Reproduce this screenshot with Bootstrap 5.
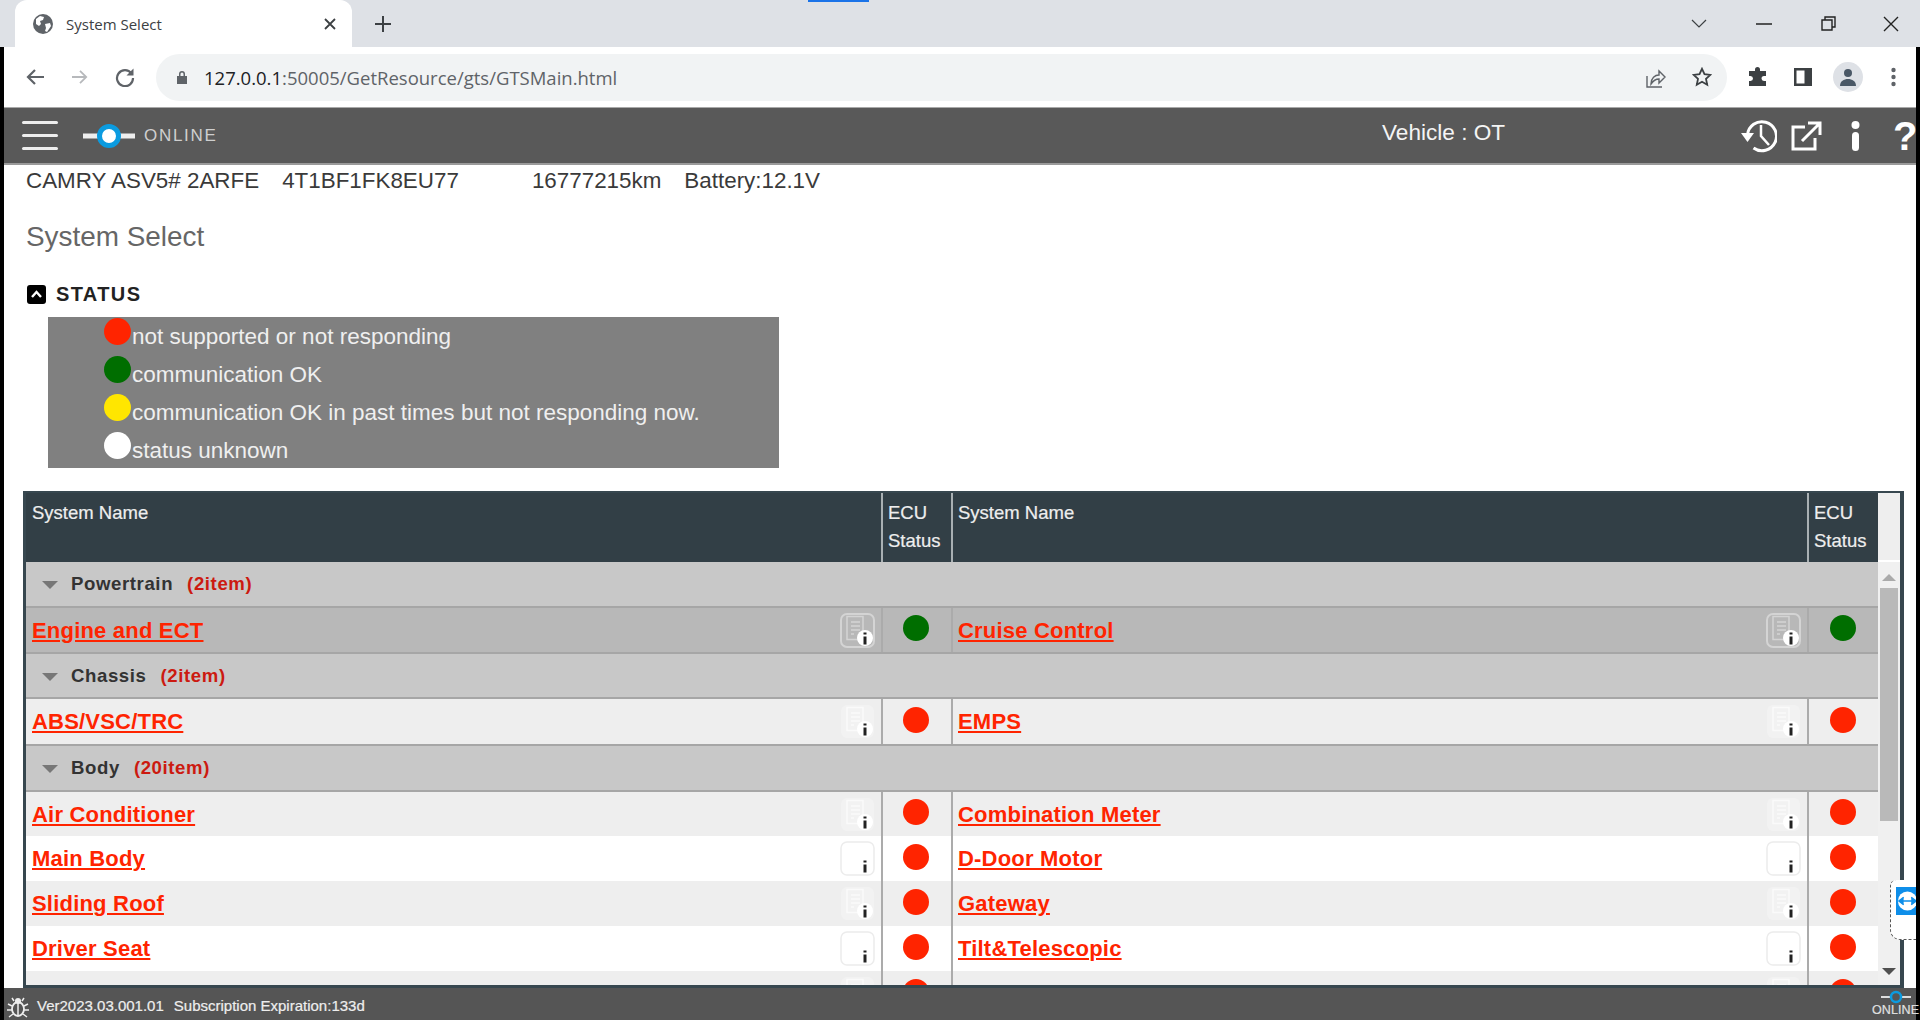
<!DOCTYPE html>
<html lang="en">
<head>
<meta charset="utf-8">
<title>System Select</title>
<link href="https://cdn.jsdelivr.net/npm/bootstrap@5.3.0/dist/css/bootstrap.min.css" rel="stylesheet">
<style>
html,body{height:100%;overflow:hidden}
body{background:#000;font-family:"Liberation Sans",Arial,sans-serif;color:#333}
.tabstrip{height:47px;background:#dee1e6;padding-left:15px;position:relative}
.topline{position:absolute;left:808px;top:0;width:61px;height:2px;background:#1a73e8}
.tabshape{width:337px;height:47px;background:#fff;border-radius:12px 12px 0 0;padding:0 16px 0 18px;font:15px "Open Sans",sans-serif;color:#3c4043}
.tabtitle{margin-left:13px;width:258px}
.plus{margin-left:22px}
.winctl{margin-left:auto}
.winbtn{width:65px;justify-content:center}
.winbtn.lastbtn{width:59px}
.shell{flex:1;min-height:0;margin:0 4px;background:#fff;position:relative}
.toolbar{height:61px;background:#fff;border-bottom:1px solid #a9a9a9;padding-left:21px}
.navicons{gap:26px;width:131px}
.omnibox{width:1571px;height:47px;background:#f1f3f4;border-radius:24px;padding:0 15px 0 21px;font:18.5px "Open Sans",sans-serif;color:#5f6368}
.omnibox b{font-weight:400;color:#202124}
.urltext{margin-left:17px}
.omniright{margin-left:auto;gap:26px}
.extras{gap:26px;margin-left:21px}
.avatar{width:30px;height:30px;border-radius:50%;background:#dee1e6;display:flex;align-items:center;justify-content:center;margin:0 2px 0 -5px}
.apphead{height:57px;background:#595959;border-bottom:2px solid #9a9a9a;padding-left:18px;color:#fff;overflow:hidden}
.burger{width:36px;gap:9.5px}
.burger span{height:3.5px;background:#eee;border-radius:2px}
.onlineico{margin-left:25px}
.onlinetxt{font-size:17px;letter-spacing:1.7px;color:#cfcfcf;margin-left:9px}
.vehicle{position:absolute;left:1378px;top:73px;font-size:22.6px;color:#f4f4f4;line-height:26px}
.headicons{margin-left:auto;height:100%}
.hi1{margin-right:14px}.hi2{margin-right:29px}.hi3{margin-right:33px}
.qmark{font-size:40px;font-weight:700;line-height:1;width:23px;color:#fff}
.content{flex:1;min-height:0;padding:0 12px 0 19px;background:#fff;display:flex;flex-direction:column}
.vinfo{font-size:22.4px;line-height:26px;margin:3px 0 0 3px;white-space:pre;color:#3a3a3a}
.vg1{margin-left:23px}.vg2{margin-left:73px}.vg3{margin-left:23px}
.pagetitle{font-size:27.9px;line-height:32px;font-weight:400;color:#666;margin:27px 0 0 3px}
.statushead{font-size:20px;font-weight:700;letter-spacing:1.4px;color:#222;margin:28px 0 0 4px;line-height:26px}
.togglebox{width:19px;height:19px;background:#000;border-radius:3px;margin-right:10px}
.legend{width:731px;height:151px;background:#808080;margin:10px 0 0 25px;padding:1px 0 0 56px}
.legrow{height:38px;font-size:22.5px;color:#efefef;line-height:26px}
.legrow i{display:block;width:27px;height:27px;border-radius:50%;flex:none}
.legrow span{padding:6px 0 0 1px}
.c-r{background:#ff2400}.c-g{background:#006e00}.c-y{background:#ffe600}.c-w{background:#fff}
.frame{margin:23px 0 0 0;width:1881px;flex:1;min-height:0;border:solid #37474f;border-width:2px 4px 3px 3px;display:flex;overflow:hidden;background:#f0f0f0}
.tblwrap{width:1852px;overflow:hidden;flex:none}
.gts{table-layout:fixed;width:1852px;border-collapse:collapse;margin:0}
.cw1{width:856px}.cw2{width:70px}
.gts th{background:#323f46;color:#eee;font-size:18.5px;font-weight:400;line-height:28px;height:69px;vertical-align:top;padding:6px 6px;-webkit-text-stroke:.2px #eee}
.gts th.sep{border-left:2px solid #a9b0b3;padding-left:5px}
.grp td{background:#c8c8c8;height:46px;border-bottom:2px solid #a6a6a6;padding:0 0 0 16px;font-size:18.6px;font-weight:700;color:#333;letter-spacing:.6px;vertical-align:middle}
.grp.tight td{height:45px}
.grp .tri{display:inline-block;width:0;height:0;border:solid transparent;border-width:8px 8px 0;border-top-color:#777;margin-right:13px;vertical-align:middle}
.grp em{font-style:normal;color:#cc1a10;margin-left:14px}
.rw td{height:45px;padding:0;vertical-align:middle}
.rw.bd td{border-bottom:2px solid #a6a6a6;height:47px}
.rw.sel.bd td{height:46px}
.rw.sel td{background:#b8b8b8}
.rw.alt td{background:#eee}
.rw.pl td{background:#fff}
.rw .nm{padding:0 6px}
.rw .nm.second{padding-left:5px}
.rw a{font-size:22px;font-weight:700;color:#ff2400;letter-spacing:.2px}
.rw .st{border-left:2px solid #ababab;border-right:2px solid #ababab;text-align:center;padding-right:2px}
.rw .st.last{border-right:0}
.rw .st i{display:block;width:26px;height:26px;border-radius:50%;margin:-4px auto 0}
.docbtn{width:35px;height:35px;flex:none}
.bar{width:22px;flex:none;background:#f0f0f0;display:flex;flex-direction:column;align-items:center}
.barhead{height:69px;width:100%;background:#eee;border-bottom:2px solid #fff;flex:none}
.arrow{width:0;height:0;border:solid transparent;flex:none}
.up{border-width:0 7px 7px;border-bottom-color:#aaa;margin-top:12px}
.thumb{width:18px;height:233px;background:#b9b9b9;margin-top:7px;flex:none}
.down{border-width:7px 7px 0;border-top-color:#505050;margin-top:auto;margin-bottom:10px}
.appfoot{height:32px;background:#555;color:#eee;font-size:15px;padding:5px 0 0 3px;-webkit-text-stroke:.2px #eee;position:relative}
.appfoot .ver{margin:0 10px 0 8px}
.footonline{margin:-7px 0 0 auto;width:41px;line-height:12px;font-size:12.5px;letter-spacing:.1px;color:#ddd;text-align:center;flex-direction:column}
.tv{position:absolute;right:0;top:833px;width:26px;height:60px;background:#fff;border-left:1px dashed #555;border-bottom:1px dashed #555;border-radius:6px 0 0 10px;padding:7px 0 0 5px}
.tvbox{height:28px;background:#0e8ee9}
</style>
</head>
<body class="d-flex flex-column">
<div class="tabstrip d-flex">
  <div class="topline"></div>
  <div class="tabshape d-flex align-items-center">
    <svg width="20" height="20" viewBox="0 0 20 20"><circle cx="10" cy="10" r="10" fill="#5f6368"/><path d="M3 5l4-3 4 1-1 3-3 1 1 3-2 2-3-2zM12 10l5-1 1 3-4 6-2-1 1-3z" fill="#fff"/></svg>
    <span class="tabtitle">System Select</span>
    <svg width="12" height="12" viewBox="0 0 12 12"><path d="M1 1l10 10M11 1L1 11" stroke="#3c4043" stroke-width="1.8"/></svg>
  </div>
  <div class="plus d-flex align-items-center"><svg width="18" height="18" viewBox="0 0 18 18"><path d="M9 1v16M1 9h16" stroke="#3c4043" stroke-width="2"/></svg></div>
  <div class="winctl d-flex align-items-center">
    <span class="winbtn d-flex"><svg width="16" height="10" viewBox="0 0 16 10"><path d="M1 1l7 7 7-7" fill="none" stroke="#3c4043" stroke-width="1.2"/></svg></span>
    <span class="winbtn d-flex"><svg width="16" height="2" viewBox="0 0 16 2"><path d="M0 1h16" stroke="#222" stroke-width="1.5"/></svg></span>
    <span class="winbtn d-flex"><svg width="15" height="15" viewBox="0 0 15 15"><path d="M1 4h10v10H1zM4 4V1h10v10h-3" fill="none" stroke="#222" stroke-width="1.4"/></svg></span>
    <span class="winbtn lastbtn d-flex"><svg width="16" height="16" viewBox="0 0 16 16"><path d="M1 1l14 14M15 1L1 15" stroke="#222" stroke-width="1.4"/></svg></span>
  </div>
</div>
<div class="shell d-flex flex-column">
  <div class="toolbar d-flex align-items-center">
    <div class="navicons d-flex align-items-center">
      <svg width="20" height="18" viewBox="0 0 20 18"><path d="M19 9H3M10 2L3 9l7 7" fill="none" stroke="#5f6368" stroke-width="2.2"/></svg>
      <svg width="18" height="16" viewBox="0 0 20 18"><path d="M1 9h16M10 2l7 7-7 7" fill="none" stroke="#b7b9bc" stroke-width="2"/></svg>
      <svg width="20" height="20" viewBox="0 0 20 20"><path d="M16.500 6.500A8 8 0 1 0 18 11" fill="none" stroke="#5f6368" stroke-width="2.2"/><path d="M18.500 1.500v7h-7z" fill="#5f6368"/></svg>
    </div>
    <div class="omnibox d-flex align-items-center">
      <svg width="10" height="14" viewBox="0 0 10 14"><path d="M2 6V4a3 3 0 0 1 6 0v2h2v8H0V6zm1.500 0h3V4a1.500 1.500 0 0 0-3 0z" fill="#5f6368"/></svg>
      <span class="urltext"><b>127.0.0.1</b>:50005/GetResource/gts/GTSMain.html</span>
      <div class="omniright d-flex align-items-center">
        <svg width="20" height="21" viewBox="0 0 20 21"><path d="M1 9v11h15" fill="none" stroke="#5f6368" stroke-width="1.4"/><path d="M5 17c0-6 4-9 8-9V4l6 6-6 6v-4c-4 0-6 2-8 5z" fill="none" stroke="#5f6368" stroke-width="1.4"/></svg>
        <svg width="20" height="20" viewBox="0 0 20 20"><path d="M10 1.800l2.500 5.400 5.800.7-4.300 4 1.200 5.800-5.200-2.900-5.200 2.900 1.200-5.800-4.300-4 5.800-.7z" fill="none" stroke="#3c4043" stroke-width="1.8"/></svg>
      </div>
    </div>
    <div class="extras d-flex align-items-center">
      <svg width="20" height="20" viewBox="0 0 20 20"><path d="M7 2.500a2.500 2.500 0 0 1 5 0V4h6v5h-2a2.500 2.500 0 0 0 0 5h2v5H1v-5h1.500a2.500 2.500 0 0 0 0-5H1V4h6z" fill="#3c4043"/></svg>
      <svg width="18" height="18" viewBox="0 0 18 18"><path d="M0 0h18v18H0zM2.500 2.500v13h8v-13z" fill="#3c4043" fill-rule="evenodd"/></svg>
      <span class="avatar"><svg width="18" height="18" viewBox="0 0 18 18"><circle cx="9" cy="5" r="4" fill="#4a5866"/><path d="M1 18c0-5 4-7 8-7s8 2 8 7z" fill="#4a5866"/></svg></span>
      <svg width="5" height="20" viewBox="0 0 5 20"><circle cx="2.500" cy="3" r="2.200" fill="#5f6368"/><circle cx="2.500" cy="10" r="2.200" fill="#5f6368"/><circle cx="2.500" cy="17" r="2.200" fill="#5f6368"/></svg>
    </div>
  </div>
  <div class="apphead d-flex align-items-center">
    <div class="burger d-flex flex-column"><span></span><span></span><span></span></div>
    <svg class="onlineico" width="52" height="26" viewBox="0 0 52 26"><path d="M0 13h16M36 13h16" stroke="#eee" stroke-width="5"/><circle cx="26" cy="13" r="9.500" fill="#fff" stroke="#0b9be0" stroke-width="5"/></svg>
    <span class="onlinetxt">ONLINE</span>
    <div class="vehicle">Vehicle : OT</div>
    <div class="headicons d-flex align-items-center">
      <svg class="hi1" width="36" height="35" viewBox="0 0 36 35"><path d="M6.500 17a14.500 14.500 0 1 1 6 13" fill="none" stroke="#fff" stroke-width="3"/><path d="M0 15h13l-6.500 9z" fill="#fff"/><path d="M20 7v11l8 9" fill="none" stroke="#fff" stroke-width="2.500"/></svg>
      <svg class="hi2" width="31" height="30" viewBox="0 0 31 30"><path d="M14 6H2v22h22V17" fill="none" stroke="#fff" stroke-width="3"/><path d="M11 20L28 3M17 2h12v12" fill="none" stroke="#fff" stroke-width="3"/></svg>
      <svg class="hi3" width="9" height="30" viewBox="0 0 9 30"><circle cx="4.500" cy="4" r="4" fill="#fff"/><rect x="1" y="11" width="7" height="19" rx="3.500" fill="#fff"/></svg>
      <span class="qmark">?</span>
    </div>
  </div>
  <div class="content">
    <div class="vinfo"><span>CAMRY ASV5# 2ARFE</span><span class="vg1">4T1BF1FK8EU77</span><span class="vg2">16777215km</span><span class="vg3">Battery:12.1V</span></div>
    <h1 class="pagetitle">System Select</h1>
    <div class="statushead d-flex align-items-center">
      <span class="togglebox d-flex align-items-center justify-content-center"><svg width="11" height="8" viewBox="0 0 11 8"><path d="M1 7l4.500-5L10 7" fill="none" stroke="#fff" stroke-width="2.400"/></svg></span>STATUS
    </div>
    <div class="legend">
      <div class="legrow d-flex"><i class="c-r"></i><span>not supported or not responding</span></div>
      <div class="legrow d-flex"><i class="c-g"></i><span>communication OK</span></div>
      <div class="legrow d-flex"><i class="c-y"></i><span>communication OK in past times but not responding now.</span></div>
      <div class="legrow d-flex"><i class="c-w"></i><span>status unknown</span></div>
    </div>
    <div class="frame">
      <div class="tblwrap">
        <table class="gts">
          <colgroup><col class="cw1"><col class="cw2"><col class="cw1"><col class="cw2"></colgroup>
          <thead><tr><th>System Name</th><th class="sep">ECU<br>Status</th><th class="sep">System Name</th><th class="sep">ECU<br>Status</th></tr></thead>
          <tbody id="rows"></tbody>
        </table>
      </div>
      <div class="bar">
        <div class="barhead"></div>
        <div class="arrow up"></div>
        <div class="thumb"></div>
        <div class="arrow down"></div>
      </div>
    </div>
  </div>
  <div class="appfoot d-flex align-items-center">
    <svg width="22" height="22" viewBox="0 0 22 22"><ellipse cx="11" cy="13" rx="6" ry="7" fill="none" stroke="#eee" stroke-width="1.8"/><path d="M11 6v14M7 5l-2-3M15 5l2-3M5 10L1 8M5 14H0M6 18l-4 3M17 10l4-2M17 14h5M16 18l4 3" stroke="#eee" stroke-width="1.5"/><circle cx="11" cy="5" r="3" fill="#eee"/></svg>
    <span class="ver">Ver2023.03.001.01</span><span>Subscription Expiration:133d</span>
    <div class="footonline d-flex align-items-center">
      <svg width="30" height="14" viewBox="0 0 30 14"><path d="M0 7h9M21 7h9" stroke="#ddd" stroke-width="2"/><circle cx="15" cy="7" r="5" fill="none" stroke="#0b9be0" stroke-width="2.5"/></svg>
      <span>ONLINE</span>
    </div>
  </div>
  <div class="tv">
    <div class="tvbox d-flex align-items-center justify-content-center">
      <svg width="21" height="22" viewBox="0 0 21 22"><circle cx="12" cy="11" r="10" fill="#fff"/><path d="M3 11h18M8 7l-5 4 5 4M16 7l5 4-5 4" fill="#0e8ee9" stroke="#0e8ee9" stroke-width="1.5"/></svg>
    </div>
  </div>
</div>
<script>
const ibadge=`<circle cx="25" cy="25" r="8" fill="#fff"/><path d="M25 19.500v2M25 23.500v8" stroke="#222" stroke-width="3"/>`;
const lines=c=>`<path d="M7 3.500h16v23H7zM11 9h9M11 13h9M11 17h9M11 21h3" fill="none" stroke="${c}" stroke-width="1.5"/>`;
const docsel=`<svg class="docbtn" viewBox="0 0 35 35"><rect x="1" y="1" width="33" height="33" rx="6" fill="none" stroke="#d4d4d4" stroke-width="2"/>${lines('#d4d4d4')}${ibadge}</svg>`;
const docalt=`<svg class="docbtn" viewBox="0 0 35 35"><rect x="1" y="1" width="33" height="33" rx="6" fill="#f2f2f2"/>${lines('#fafafa')}${ibadge}</svg>`;
const docpl=`<svg class="docbtn" viewBox="0 0 35 35"><rect x="1" y="1" width="33" height="33" rx="6" fill="#fff" stroke="#ececec" stroke-width="1.5"/><path d="M25 19.500v2M25 23.500v8" stroke="#222" stroke-width="3"/></svg>`;
const data=[
 ['g','Powertrain','2item','tight'],
 ['sel bd','Engine and ECT','Cruise Control','c-g'],
 ['g','Chassis','2item','tight'],
 ['alt bd','ABS/VSC/TRC','EMPS','c-r'],
 ['g','Body','20item',''],
 ['alt','Air Conditioner','Combination Meter','c-r'],
 ['pl','Main Body','D-Door Motor','c-r'],
 ['alt','Sliding Roof','Gateway','c-r'],
 ['pl','Driver Seat','Tilt&Telescopic','c-r'],
 ['alt','Air Suspension','Theft Deterrent','c-r']];
const icon=k=>k.startsWith('sel')?docsel:k.startsWith('alt')?docalt:docpl;
document.getElementById('rows').innerHTML=data.map(r=>{
 if(r[0]==='g')return `<tr class="grp ${r[3]}"><td colspan="4"><span class="tri"></span>${r[1]}<em>(${r[2]})</em></td></tr>`;
 const nm=(t,c)=>`<td class="nm ${c}"><div class="d-flex align-items-center justify-content-between"><a href="#">${t.replace('&','&amp;')}</a>${icon(r[0])}</div></td>`;
 return `<tr class="rw ${r[0]}">${nm(r[1],'')}<td class="st"><i class="${r[3]}"></i></td>${nm(r[2],'second')}<td class="st last"><i class="${r[3]}"></i></td></tr>`;
}).join('');
</script>
<script src="https://cdn.jsdelivr.net/npm/bootstrap@5.3.0/dist/js/bootstrap.bundle.min.js"></script>
</body>
</html>
